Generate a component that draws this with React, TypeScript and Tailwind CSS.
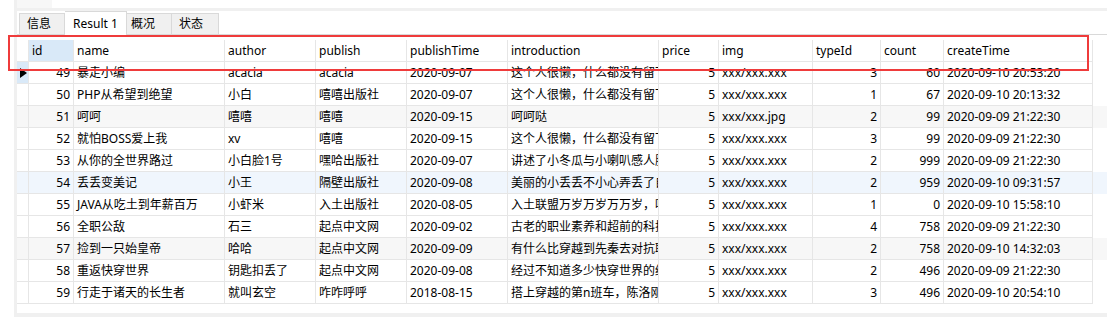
import React from "react"

interface Book {
  id: number
  name: string
  author: string
  publish: string
  publishTime: string
  introduction: string
  price: number
  img: string
  typeId: number
  count: number
  createTime: string
}

const books: Book[] = [
  { id: 49, name: "暴走小编", author: "acacia", publish: "acacia", publishTime: "2020-09-07", introduction: "这个人很懒，什么都没有留下", price: 5, img: "xxx/xxx.xxx", typeId: 3, count: 60, createTime: "2020-09-10 20:53:20" },
  { id: 50, name: "PHP从希望到绝望", author: "小白", publish: "嘻嘻出版社", publishTime: "2020-09-07", introduction: "这个人很懒，什么都没有留下", price: 5, img: "xxx/xxx.xxx", typeId: 1, count: 67, createTime: "2020-09-10 20:13:32" },
  { id: 51, name: "呵呵", author: "嘻嘻", publish: "嘻嘻", publishTime: "2020-09-15", introduction: "呵呵哒", price: 5, img: "xxx/xxx.jpg", typeId: 2, count: 99, createTime: "2020-09-09 21:22:30" },
  { id: 52, name: "就怕BOSS爱上我", author: "xv", publish: "嘻嘻", publishTime: "2020-09-15", introduction: "这个人很懒，什么都没有留下", price: 5, img: "xxx/xxx.xxx", typeId: 3, count: 99, createTime: "2020-09-09 21:22:30" },
  { id: 53, name: "从你的全世界路过", author: "小白脸1号", publish: "嘿哈出版社", publishTime: "2020-09-07", introduction: "讲述了小冬瓜与小喇叭感人肺腑的故事", price: 5, img: "xxx/xxx.xxx", typeId: 2, count: 999, createTime: "2020-09-09 21:22:30" },
  { id: 54, name: "丢丢变美记", author: "小王", publish: "隔壁出版社", publishTime: "2020-09-08", introduction: "美丽的小丢丢不小心弄丢了自己", price: 5, img: "xxx/xxx.xxx", typeId: 2, count: 959, createTime: "2020-09-10 09:31:57" },
  { id: 55, name: "JAVA从吃土到年薪百万", author: "小虾米", publish: "入土出版社", publishTime: "2020-08-05", introduction: "入土联盟万岁万岁万万岁，哈哈哈", price: 5, img: "xxx/xxx.xxx", typeId: 1, count: 0, createTime: "2020-09-10 15:58:10" },
  { id: 56, name: "全职公敌", author: "石三", publish: "起点中文网", publishTime: "2020-09-02", introduction: "古老的职业素养和超前的科技", price: 5, img: "xxx/xxx.xxx", typeId: 4, count: 758, createTime: "2020-09-09 21:22:30" },
  { id: 57, name: "捡到一只始皇帝", author: "哈哈", publish: "起点中文网", publishTime: "2020-09-09", introduction: "有什么比穿越到先秦去对抗联军", price: 5, img: "xxx/xxx.xxx", typeId: 2, count: 758, createTime: "2020-09-10 14:32:03" },
  { id: 58, name: "重返快穿世界", author: "钥匙扣丢了", publish: "起点中文网", publishTime: "2020-09-08", introduction: "经过不知道多少快穿世界的经历", price: 5, img: "xxx/xxx.xxx", typeId: 2, count: 496, createTime: "2020-09-09 21:22:30" },
  { id: 59, name: "行走于诸天的长生者", author: "就叫玄空", publish: "咋咋呼呼", publishTime: "2018-08-15", introduction: "搭上穿越的第n班车，陈洛刚刚", price: 5, img: "xxx/xxx.xxx", typeId: 3, count: 496, createTime: "2020-09-10 20:54:10" },
]

const columns: { key: keyof Book; w: string; right?: boolean }[] = [
  { key: "id", w: "w-[45px]", right: true },
  { key: "name", w: "w-[151px]" },
  { key: "author", w: "w-[91px]" },
  { key: "publish", w: "w-[91px]" },
  { key: "publishTime", w: "w-[101px]" },
  { key: "introduction", w: "w-[151px]" },
  { key: "price", w: "w-[60px]", right: true },
  { key: "img", w: "w-[94px]" },
  { key: "typeId", w: "w-[68px]", right: true },
  { key: "count", w: "w-[63px]", right: true },
  { key: "createTime", w: "w-[149px]" },
]

const cell = "h-[22px] shrink-0 border-r border-b border-[#e6e6e6] px-[3px] leading-[21px] whitespace-nowrap overflow-hidden"

export default function App() {
  return (
    <div className="relative flex w-[1107px] h-[317px] overflow-hidden bg-white text-[12px] text-black font-['Noto_Sans','Noto_Sans_CJK_SC',sans-serif]">
      <div className="w-[14px] shrink-0 bg-white" />
      <div className="w-[3px] shrink-0 bg-[#f0f0f0]" />

      <div className="flex flex-1 flex-col">
        {/* top strip */}
        <div className="flex h-[8px]">
          <div className="w-[35px] bg-[#f7f7f7]" />
        </div>
        <div className="h-[3px] bg-[#f0f0f0]" />

        {/* tabs */}
        <div className="flex h-[24px] items-end border-b border-[#d9d9d9] pl-[2px]">
          <div className="flex h-[21px] w-[46px] items-center border border-b-0 border-[#d9d9d9] bg-[#f0f0f0] pl-[7px]">信息</div>
          <div className="-mb-px flex h-[24px] w-[62px] items-center border border-b-0 border-l-0 border-[#d9d9d9] bg-white pl-[8px]">Result 1</div>
          <div className="flex h-[21px] w-[45px] items-center border border-b-0 border-l-0 border-[#d9d9d9] bg-[#f0f0f0] pl-[4px]">概况</div>
          <div className="flex h-[21px] w-[47px] items-center border border-b-0 border-l-0 border-[#d9d9d9] bg-[#f0f0f0] pl-[7px]">状态</div>
        </div>

        {/* grid */}
        <div className="pt-[5px]">
          <div className="flex">
            <div className={`${cell} w-[12px] bg-white`} />
            {columns.map((c) => (
              <div key={c.key} className={`${cell} ${c.w} ${c.key === "id" ? "bg-[#d9e9f8]" : "bg-white"}`}>
                {c.key}
              </div>
            ))}
          </div>

          {books.map((b, i) => {
            const bg = b.id === 54 ? "bg-[#f0f6fd]" : b.id === 51 || b.id === 57 ? "bg-[#f7f7f7]" : "bg-white"
            return (
              <div key={b.id} className={`flex ${bg}`}>
                <div className={`${cell} w-[12px] flex items-center !px-0 ${i === 0 ? "bg-[#d9e9f8]" : ""}`}>
                  {i === 0 && (
                    <svg width="7" height="10" viewBox="0 0 7 10" className="ml-[3px]">
                      <path d="M0 0 L7 5 L0 10 Z" fill="#000" />
                    </svg>
                  )}
                </div>
                {columns.map((c) => (
                  <div key={c.key} className={`${cell} ${c.w} ${c.right ? "text-right" : ""}`}>
                    {b[c.key]}
                  </div>
                ))}
              </div>
            )
          })}
        </div>

        <div className="h-[9px] bg-white" />
        <div className="h-[4px] bg-[#f0f0f0]" />
      </div>

      {/* red annotation box */}
      <div className="pointer-events-none absolute left-[8px] top-[35px] h-[36px] w-[1081px] border-2 border-[#ef3b3b]" />
    </div>
  )
}
